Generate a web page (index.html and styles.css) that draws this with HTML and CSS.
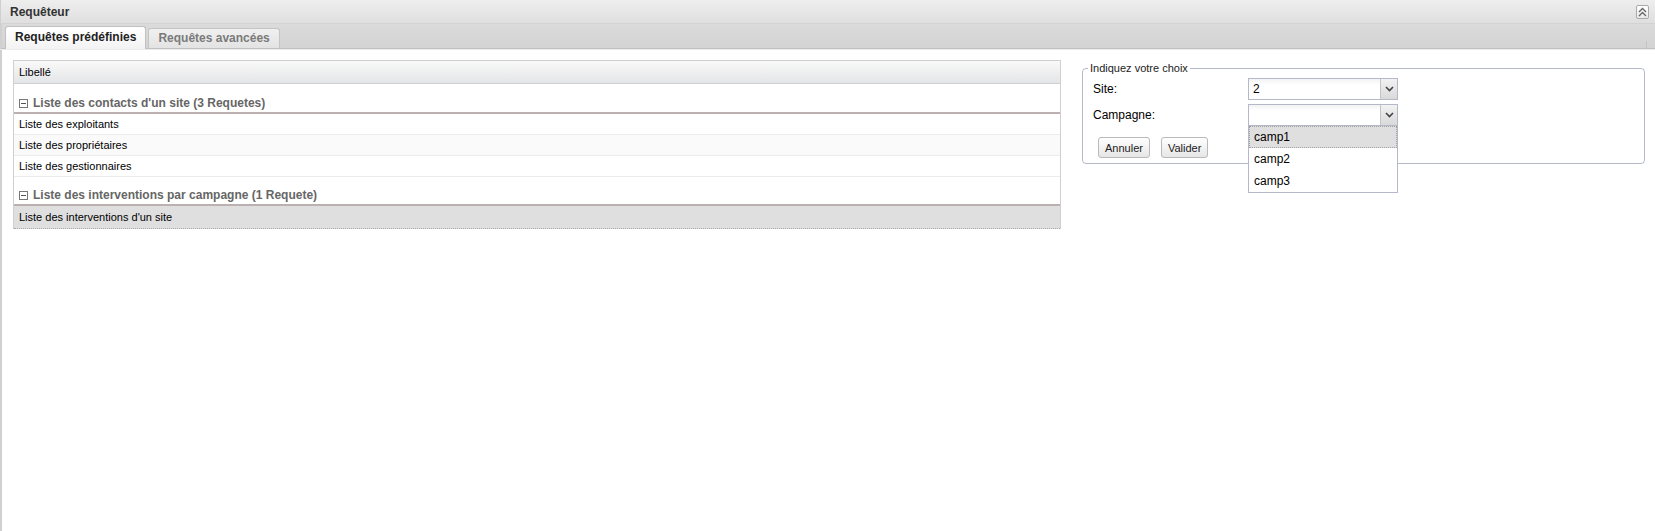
FILE: index.html
```html
<!DOCTYPE html>
<html lang="fr">
<head>
<meta charset="utf-8">
<title>Requêteur</title>
<link rel="stylesheet" href="styles.css">
</head>
<body>
<div class="panel">
  <div class="panel-header">
    <span class="panel-title">Requêteur</span>
    <span class="tool">
      <svg width="11" height="12" viewBox="0 0 11 12"><polyline points="2,6 5.5,2.5 9,6" fill="none" stroke="#666" stroke-width="1.4"/><polyline points="2,10 5.5,6.5 9,10" fill="none" stroke="#666" stroke-width="1.4"/></svg>
    </span>
  </div>
  <div class="tabbar">
    <div class="tab tab-active">Requêtes prédéfinies</div>
    <div class="tab">Requêtes avancées</div>
  </div>
  <div class="panel-body">
    <div class="grid">
      <div class="grid-head">Libellé</div>
      <div class="group group-first"><span class="minus"></span>Liste des contacts d'un site (3 Requetes)</div>
      <div class="row">Liste des exploitants</div>
      <div class="row row-alt">Liste des propriétaires</div>
      <div class="row">Liste des gestionnaires</div>
      <div class="group"><span class="minus"></span>Liste des interventions par campagne (1 Requete)</div>
      <div class="row row-selected">Liste des interventions d'un site</div>
    </div>
    <fieldset class="choice">
      <legend>Indiquez votre choix</legend>
      <div class="field">
        <label class="field-label">Site:</label>
        <div class="combo">
          <div class="combo-input">2</div>
          <div class="combo-trigger"><svg width="9" height="6" viewBox="0 0 9 6"><polyline points="1,1 4.5,4.5 8,1" fill="none" stroke="#444" stroke-width="1.6"/></svg></div>
        </div>
      </div>
      <div class="field">
        <label class="field-label">Campagne:</label>
        <div class="combo combo-open">
          <div class="combo-input"></div>
          <div class="combo-trigger"><svg width="9" height="6" viewBox="0 0 9 6"><polyline points="1,1 4.5,4.5 8,1" fill="none" stroke="#444" stroke-width="1.6"/></svg></div>
          <ul class="combo-list">
            <li class="item item-selected">camp1</li>
            <li class="item">camp2</li>
            <li class="item">camp3</li>
          </ul>
        </div>
      </div>
      <div class="buttons">
        <button class="btn">Annuler</button>
        <button class="btn">Valider</button>
      </div>
    </fieldset>
  </div>
</div>
</body>
</html>
```

FILE: styles.css
```css
* { box-sizing: border-box; }
html, body { margin: 0; padding: 0; background: #fff; }
body { font-family: "Liberation Sans", Arial, sans-serif; font-size: 11px; color: #000; }

.panel { width: 1655px; height: 531px; display: flex; flex-direction: column; }

.panel-header {
  height: 24px;
  background: linear-gradient(#eeeeee, #dfdfdf);
  border-bottom: 1px solid #d2d2d2;
  border-left: 1px solid #d0d0d0;
  display: flex;
  align-items: center;
  justify-content: space-between;
  padding: 0 6px 0 9px;
}
.panel-title { font-weight: bold; font-size: 12px; color: #333; }
.tool {
  width: 13px; height: 14px;
  border: 1px solid #a9a9a9;
  border-radius: 2px;
  background: linear-gradient(#ffffff, #e9e9e9);
  display: flex; align-items: center; justify-content: center;
}

.tabbar {
  height: 25px;
  background: linear-gradient(#dbdbdb, #d3d3d3);
  border-bottom: 1px solid #c2c2c2;
  box-shadow: 0 1px 0 #ececec;
  border-left: 2px solid #d0d0d0;
  display: flex;
  align-items: flex-end;
  padding-left: 3px;
  gap: 2px;
  position: relative;
}
.tabbar::after {
  content: "";
  position: absolute;
  right: 8px;
  bottom: -1px;
  width: 1px;
  height: 8px;
  background: #c4c4c4;
}
.tab {
  height: 20px;
  padding: 0 9px;
  border: 1px solid #c4c4c4;
  border-bottom: none;
  border-radius: 3px 3px 0 0;
  background: linear-gradient(#f0f0f0, #e3e3e3);
  font-weight: bold;
  font-size: 12px;
  color: #7a7a7a;
  line-height: 19px;
}
.tab-active {
  height: 23px;
  margin-bottom: -1px;
  background: linear-gradient(#ffffff, #f3f3f3);
  color: #222;
  line-height: 21px;
  border-color: #c0c0c0;
}

.panel-body {
  flex: 1;
  border-left: 2px solid #d0d0d0;
  padding: 11px 10px 0 11px;
  display: flex;
  align-items: flex-start;
}

.grid {
  width: 1048px;
  border: 1px solid #d0d0d0;
  border-bottom: none;
}
.grid-head {
  height: 23px;
  line-height: 22px;
  padding-left: 5px;
  background: linear-gradient(#f9f9f9, #e4e5e7);
  border-bottom: 1px solid #d0d0d0;
}
.group {
  padding: 10px 0 1px 5px;
  line-height: 16px;
  border-bottom: 2px solid #bcb0b0;
  font-weight: bold;
  font-size: 12px;
  color: #666;
  display: flex;
  align-items: center;
}
.group-first { padding-top: 11px; }
.minus {
  width: 9px; height: 9px;
  border: 1px solid #777;
  background: #fff;
  margin-right: 5px;
  position: relative;
  display: inline-block;
}
.minus::after {
  content: "";
  position: absolute;
  left: 1px; right: 1px; top: 3px;
  height: 1px;
  background: #555;
}
.row {
  height: 21px;
  line-height: 20px;
  padding-left: 5px;
  border-bottom: 1px solid #ececec;
}
.row-alt { background: #fafafa; }
.row-selected {
  height: 23px;
  background: #dfdfdf;
  border-bottom: 1px dotted #a8a8a8;
  line-height: 22px;
}

.choice {
  flex: 1;
  margin: 2px 0 0 21px;
  padding: 3px 10px 5px 10px;
  border: 1px solid #b5b8c8;
  border-radius: 4px;
  min-width: 0;
}
.choice legend {
  padding: 0 2px;
  margin-left: -5px;
  font-size: 11px;
  line-height: 13px;
  color: #222;
}
.field {
  display: flex;
  align-items: center;
  height: 22px;
  margin-bottom: 4px;
  font-size: 12px;
}
.field-label { width: 155px; }
.combo {
  width: 150px;
  height: 22px;
  display: flex;
  position: relative;
  border: 1px solid #b5b8c8;
  background: #fff;
}
.combo-input {
  flex: 1;
  padding-left: 4px;
  line-height: 20px;
  background: linear-gradient(#f3f3f3, #ffffff 6px);
}
.combo-trigger {
  width: 17px;
  border-left: 1px solid #c4c4c4;
  background: linear-gradient(#f2f2f2, #d9d9d9);
  display: flex; align-items: center; justify-content: center;
}
.combo-list {
  position: absolute;
  top: calc(100% + 1px);
  left: -1px;
  width: 150px;
  margin: 0;
  padding: 0;
  list-style: none;
  background: #fff;
  border: 1px solid #b5b8c8;
  border-top: none;
  z-index: 5;
}
.item {
  height: 22px;
  line-height: 20px;
  padding-left: 4px;
  border: 1px solid transparent;
}
.item-selected {
  background: #dfdfdf;
  border: 1px dotted #a0a0a0;
}
.buttons {
  display: flex;
  gap: 11px;
  padding-left: 5px;
  margin-top: 11px;
}
.btn {
  height: 21px;
  padding: 0 6px;
  border: 1px solid #b9b9b9;
  border-radius: 3px;
  background: linear-gradient(#ffffff, #e6e6e6);
  font-family: "Liberation Sans", Arial, sans-serif;
  font-size: 11px;
  color: #222;
}
```
